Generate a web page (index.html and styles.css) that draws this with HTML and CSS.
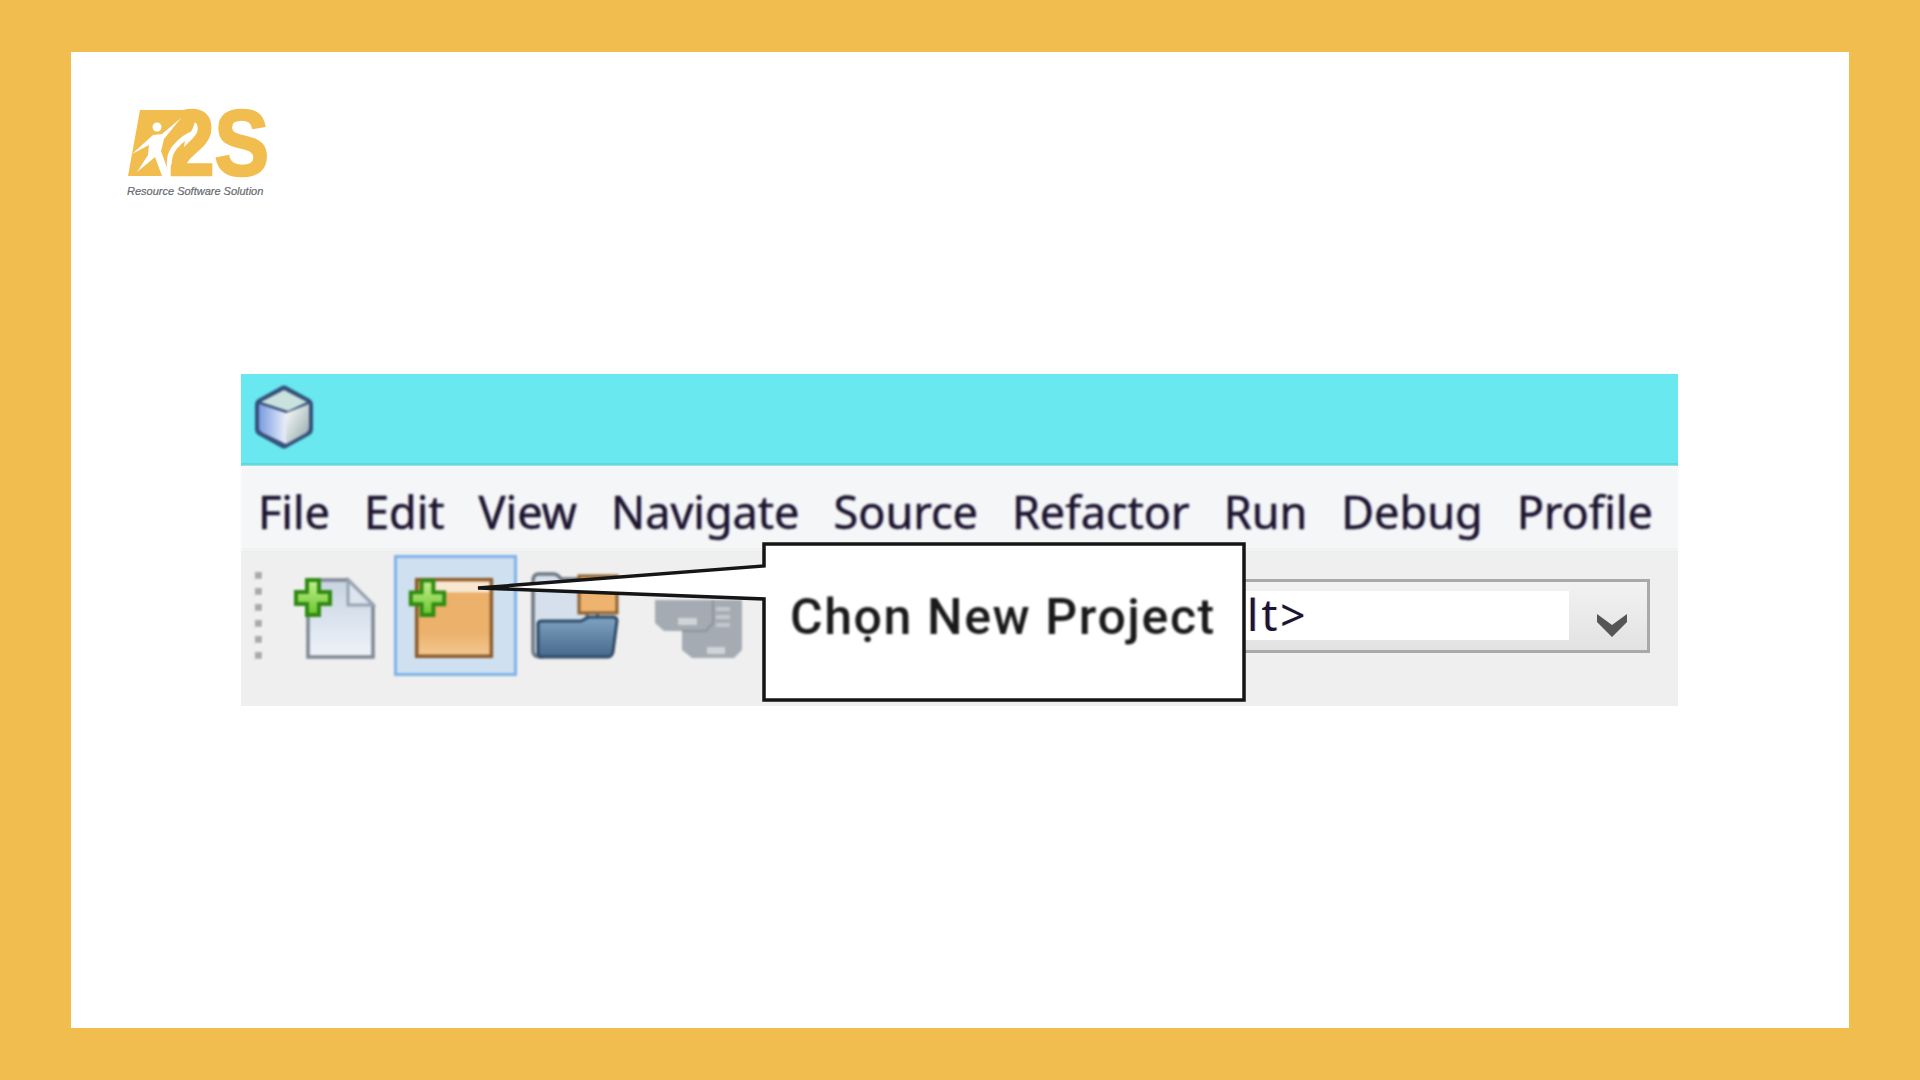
FILE: index.html
```html
<!DOCTYPE html>
<html lang="vi">
<head>
<meta charset="utf-8">
<title>Chọn New Project</title>
<link rel="stylesheet" href="styles.css">
</head>
<body>
<main class="card">
  <div class="logo">
    <svg class="logo-mark" viewBox="0 0 150 76" aria-hidden="true">
      <path class="logo-r" d="M15 5H62C70 5 72 12 69 20C67 26 64 30 60 36L54 71H3Z"/>
      <path class="logo-gap" d="M47 73C42 58 44 49 50 42C55 36 60 31 70 28"/>
      <text class="logo-type" x="44" y="70" textLength="100" lengthAdjust="spacingAndGlyphs">2S</text>
      <circle class="logo-person" cx="32" cy="22" r="4.5"/>
      <path class="logo-person" d="M56 13L37 29L28 30L7 49L24 40L23 50L12 67L23 58L30 52L37 71L45 71L36 46L39 34Z"/>
    </svg>
    <div class="logo-sub">Resource Software Solution</div>
  </div>

  <section class="shot">
    <div class="titlebar">
      <svg class="cube" viewBox="0 0 62 66" aria-hidden="true">
        <defs>
          <linearGradient id="cubeL" x1="0" y1="0" x2="1" y2="0"><stop offset="0" stop-color="#7b9be0"/><stop offset="1" stop-color="#e8eefb"/></linearGradient>
          <linearGradient id="cubeR" x1="0" y1="0" x2="1" y2="1"><stop offset="0" stop-color="#ffffff"/><stop offset="1" stop-color="#8fa6a6"/></linearGradient>
        </defs>
        <path class="cube-edge" d="M27 3C30 1 32 1 35 3L55 14C59 16 60 18 60 22V44C60 48 59 50 55 52L35 63C32 65 30 65 27 63L7 52C3 50 2 48 2 44V22C2 18 3 16 7 14Z"/>
        <path fill="#c9e2dd" d="M31 6L54 18L35 27L8 18Z"/>
        <path fill="url(#cubeL)" d="M6 20L33 29V60L10 49C7 47 6 46 6 43Z"/>
        <path fill="url(#cubeR)" d="M33 29L56 20V43C56 46 55 47 53 49L33 60Z"/>
      </svg>
    </div>

    <nav class="menubar">
      <span>File</span><span>Edit</span><span>View</span><span>Navigate</span><span>Source</span><span>Refactor</span><span>Run</span><span>Debug</span><span>Profile</span>
    </nav>

    <div class="toolbar">
      <div class="grip"><i></i><i></i><i></i><i></i><i></i><i></i></div>

      <div class="tool">
        <svg viewBox="0 0 123 121" aria-hidden="true">
          <defs>
            <linearGradient id="paper" x1="0" y1="0" x2="0" y2="1"><stop offset="0" stop-color="#c6d3e2"/><stop offset="1" stop-color="#eef3f9"/></linearGradient>
            <linearGradient id="plus" x1="0" y1="0" x2="0" y2="1"><stop offset="0" stop-color="#c4f08f"/><stop offset="1" stop-color="#6cc52f"/></linearGradient>
            <linearGradient id="box" x1="0" y1="0" x2="0" y2="1"><stop offset="0" stop-color="#ecb068"/><stop offset=".7" stop-color="#ecb26d"/><stop offset="1" stop-color="#f3c893"/></linearGradient>
            <linearGradient id="folder" x1="0" y1="0" x2="0" y2="1"><stop offset="0" stop-color="#7fa3c3"/><stop offset="1" stop-color="#47698b"/></linearGradient>
          </defs>
          <path fill="url(#paper)" stroke="#7f8894" stroke-width="3.5" d="M37 25H77L102 50V102H37Z"/>
          <path fill="#dbe4ef" stroke="#97a3b2" stroke-width="3" d="M77 25V50H102Z"/>
          <path class="plus" d="M36 25H48V37H59V49H48V60H36V49H25V37H36Z"/>
        </svg>
      </div>

      <div class="tool tool-active">
        <svg viewBox="0 0 119 117" aria-hidden="true">
          <rect x="20" y="22" width="76" height="78" fill="url(#box)" stroke="#8b5a2b" stroke-width="3.5"/>
          <rect x="30" y="24" width="64" height="11" fill="#f8e8d2"/>
          <path class="plus" d="M25 23H37V35H48V47H37V58H25V47H14V35H25Z"/>
        </svg>
      </div>

      <div class="tool">
        <svg viewBox="0 0 123 121" aria-hidden="true">
          <path fill="#d5e0ec" stroke="#6e7782" stroke-width="3.5" d="M16 96V26C16 21 18 19 22 19H36C40 19 42 21 44 24H70V90L24 102C19 102 16 100 16 96Z"/>
          <rect x="62" y="21" width="38" height="37" fill="#eeb46f" stroke="#8a6030" stroke-width="3"/>
          <rect x="79" y="58" width="3" height="8" fill="#5d6a75"/>
          <path fill="url(#folder)" stroke="#2f4a66" stroke-width="3" d="M21 69C21 67 23 66 25 66H64L72 62H96C99 62 100 64 100 66L96 97C95 101 94 102 91 102H25C22 102 21 101 21 98Z"/>
        </svg>
      </div>

      <div class="tool">
        <svg viewBox="0 0 123 121" aria-hidden="true">
          <path fill="#a4abb2" d="M15 45H102V95L94 103H52L42 95V76H24L15 68Z"/>
          <path fill="none" stroke="#8d949b" stroke-width="2" d="M73 45V68L66 76H42"/>
          <rect x="38" y="63" width="19" height="7" fill="#d0d4d8"/>
          <rect x="67" y="92" width="18" height="7" fill="#d0d4d8"/>
          <path fill="none" stroke="#c4c9ce" stroke-width="4" d="M76 54H90M76 62H90M76 70H90"/>
        </svg>
      </div>

      <div class="combo">
        <div class="combo-field">&lt;default&gt;</div>
        <div class="combo-arrow">
          <svg viewBox="0 0 34 26" aria-hidden="true"><path d="M2 2L17 13L32 2V10L17 25L2 10Z"/></svg>
        </div>
      </div>
    </div>

    <div class="callout">
      <svg class="callout-shape" viewBox="0 0 1437 332" aria-hidden="true">
        <path d="M237 214L523 192V170H1003V326H523V225Z"/>
      </svg>
      <span class="callout-text">Chọn New Project</span>
    </div>
  </section>
</main>
</body>
</html>
```
FILE: styles.css
```css
* { box-sizing: border-box; }

html, body { margin: 0; height: 100%; }

body {
  background: #f2bd4f;
  padding: 52px 71px;
  font-family: "Noto Sans", sans-serif;
}

.card {
  height: 976px;
  background: #fff;
  padding: 53px 0 0 54px;
}

.logo { width: 150px; height: 95px; }

.logo-mark { display: block; width: 150px; height: 76px; overflow: visible; }

.logo-r { fill: #f2bd4f; }

.logo-gap { fill: none; stroke: #fff; stroke-width: 5px; }

.logo-type {
  font-family: "Liberation Sans", sans-serif;
  font-weight: 700;
  font-size: 92px;
  fill: #f2bd4f;
  stroke: #f2bd4f;
  stroke-width: 2.5px;
}

.logo-person { fill: #fff; }

.logo-sub {
  margin: 3px 0 0 2px;
  font-family: "Liberation Sans", sans-serif;
  font-style: italic;
  font-size: 11px;
  line-height: 14px;
  color: #666a70;
  white-space: nowrap;
  -webkit-text-stroke: .2px #666a70;
}

.shot {
  position: relative;
  width: 1437px;
  height: 332px;
  margin: 174px 0 0 116px;
  display: flex;
  flex-direction: column;
}

.titlebar {
  height: 92px;
  padding: 10px 0 0 12px;
  background: #69e9ef;
  border-bottom: 3px solid #5fd6dc;
}

.cube { display: block; width: 62px; height: 66px; filter: blur(1.1px); }

.cube-edge { fill: #35507a; }

.menubar {
  height: 85px;
  display: flex;
  gap: 34px;
  align-items: center;
  padding: 8px 0 0 17px;
  background: #f4f6f8;
  border-bottom: 2px solid #eaebec;
  font-size: 45px;
  line-height: 60px;
  color: #1c1430;
  -webkit-text-stroke: .3px #1c1430;
  text-shadow: -1px 0 rgba(255, 170, 40, .35), 1px 0 rgba(40, 110, 255, .35);
  filter: blur(.8px);
}

.toolbar {
  flex: 1;
  display: flex;
  align-items: flex-start;
  padding-top: 4px;
  background: #efefef;
}

.grip {
  width: 30px;
  height: 121px;
  display: flex;
  flex-direction: column;
  align-items: center;
  justify-content: center;
  gap: 9px;
  padding-left: 4px;
  filter: blur(.9px);
}

.grip i {
  width: 7px;
  height: 7px;
  background: #aaa;
  box-shadow: 1px 1px 0 #fff;
}

.tool {
  width: 123px;
  height: 121px;
  filter: blur(1px);
}

.tool svg { display: block; width: 100%; height: 100%; }

.tool-active {
  background: #cfe0f0;
  border: 3px solid #7fb2e8;
}

.plus {
  fill: url(#plus);
  stroke: #2f8a12;
  stroke-width: 4px;
}

.combo {
  flex: 1;
  height: 74px;
  margin: 24px 28px 0 0;
  display: flex;
  align-items: stretch;
  border: 3px solid #a9a9a9;
  background: linear-gradient(#f2f2f2, #e2e2e2);
  filter: blur(.5px);
}

.combo-field {
  flex: 1;
  margin: 9px 0 10px;
  padding-left: 319px;
  background: #fff;
  font-size: 44px;
  line-height: 46px;
  letter-spacing: 3px;
  color: #1c1430;
  text-shadow: -1px 0 rgba(255, 170, 40, .35), 1px 0 rgba(40, 110, 255, .35);
}

.combo-arrow {
  width: 78px;
  padding: 30px 0 0 26px;
}

.combo-arrow svg { display: block; width: 34px; height: 26px; }

.combo-arrow path { fill: #555; }

.callout {
  position: absolute;
  inset: 0;
}

.callout-shape { position: absolute; inset: 0; width: 100%; height: 100%; filter: blur(.6px); }

.callout-shape path {
  fill: #fff;
  stroke: #151515;
  stroke-width: 3.5px;
}

.callout-text {
  position: absolute;
  left: 549px;
  top: 211px;
  font-family: Roboto, sans-serif;
  font-weight: 500;
  font-size: 50px;
  line-height: 64px;
  letter-spacing: 1.6px;
  color: #1a1a1a;
  white-space: nowrap;
  filter: blur(.8px);
}
```
